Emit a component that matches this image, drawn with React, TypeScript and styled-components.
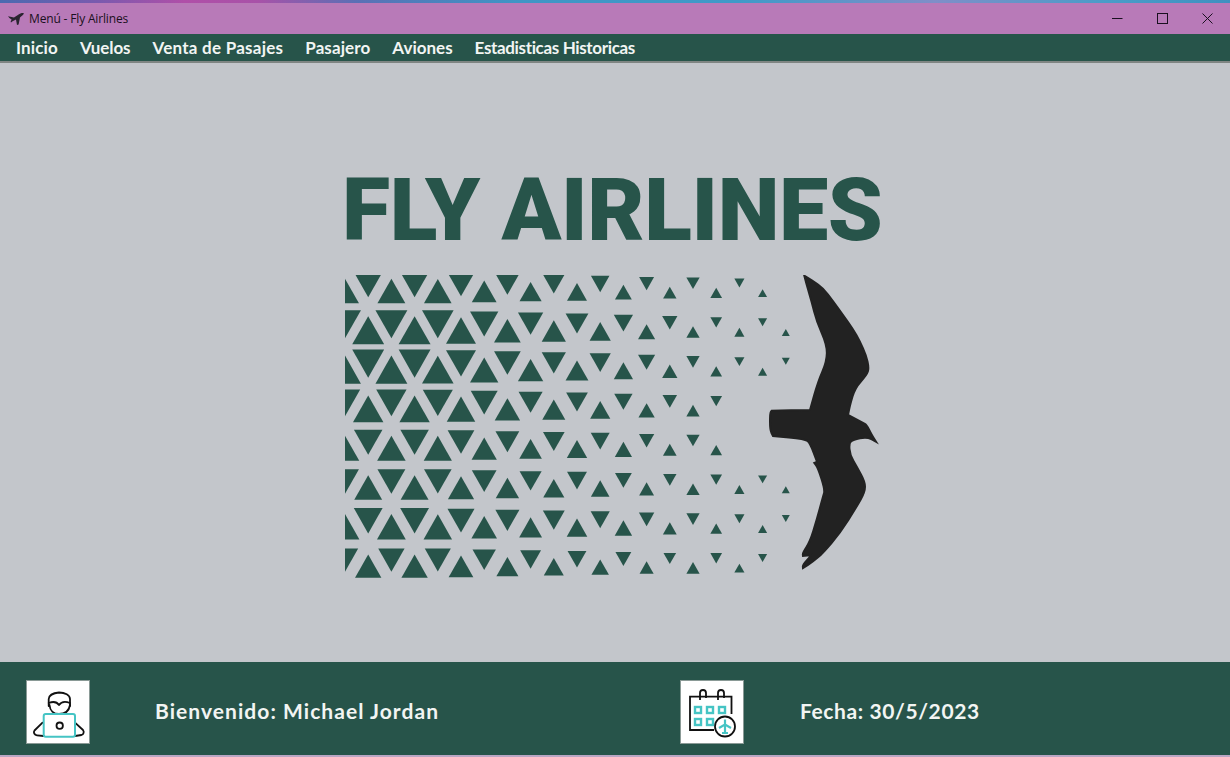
import * as React from 'react';
import styled, { createGlobalStyle } from 'styled-components';

const GlobalStyle = createGlobalStyle`
    html, body {
        margin: 0;
        padding: 0;
        background: #c3c6cb;
    }
`;

const Window = styled.div`
    width: 1230px;
    height: 757px;
    display: flex;
    flex-direction: column;
    overflow: hidden;
    font-family: "Lato", "Liberation Sans", sans-serif;
    font-variant-ligatures: none;
`;

const WallpaperStrip = styled.div`
    height: 3px;
    flex: none;
    background: linear-gradient(90deg, #4a6ab0 0%, #7a5aae 8%, #b04fa8 15%, #a852a8 21%, #5a70b5 29%, #3f95c5 42%, #3f9ac8 60%, #7f8ec8 76%, #4a9cc8 90%, #3f90c0 100%);
`;

const TitleBar = styled.div`
    height: 31px;
    flex: none;
    display: flex;
    align-items: center;
    background: #b87ab8;
    padding-left: 8px;
`;

const TitleText = styled.span`
    margin-left: 5px;
    font: 12px "Open Sans", "Liberation Sans", sans-serif;
    letter-spacing: -0.16px;
    color: #1a1020;
    flex: 1;
`;

const WindowButton = styled.div`
    width: 45px;
    height: 31px;
    display: flex;
    align-items: center;
    justify-content: center;
`;

const MenuBar = styled.nav`
    height: 27px;
    flex: none;
    display: flex;
    align-items: center;
    gap: 22px;
    padding: 0 16px;
    background: #27544a;
    border-bottom: 2px solid #7f8583;
`;

const MenuItem = styled.span<{ $spacing: number }>`
    font-size: 17px;
    font-weight: 700;
    letter-spacing: ${(p) => p.$spacing}px;
    color: #f2f5f3;
    white-space: nowrap;
`;

const Content = styled.main`
    flex: 1;
    display: flex;
    justify-content: center;
    background: #c3c6cb;
    padding-top: 103px;
`;

const Logo = styled.div`
    width: 540px;
    display: flex;
    flex-direction: column;
`;

const LogoTitle = styled.div`
    font-family: "Roboto", "Liberation Sans", sans-serif;
    font-size: 88px;
    line-height: 88px;
    font-weight: 900;
    letter-spacing: -0.4px;
    color: #27544a;
    white-space: nowrap;
    margin-left: -3px;
`;

const LogoGraphic = styled.svg`
    display: block;
    width: 540px;
    height: 310px;
    margin-top: 21px;
`;

const Footer = styled.footer`
    height: 87px;
    flex: none;
    display: flex;
    align-items: center;
    padding-top: 6px;
    background: #27544a;
    border-bottom: 2px solid #b9a6c4;
`;

const FooterGroup = styled.div<{ $width: number; $gap: number; $left: number }>`
    width: ${(p) => p.$width}px;
    padding-left: ${(p) => p.$left}px;
    display: flex;
    align-items: center;
    gap: ${(p) => p.$gap}px;
    box-sizing: border-box;
`;

const IconBox = styled.div`
    width: 62px;
    height: 62px;
    background: #ffffff;
    border: 1px solid #8a9a96;
    flex: none;
`;

const FooterText = styled.span<{ $spacing: number }>`
    font-size: 21px;
    font-weight: 700;
    letter-spacing: ${(p) => p.$spacing}px;
    color: #f2f5f3;
    white-space: nowrap;
    padding-bottom: 2px;
`;

const GREEN = '#27544a';
const STEP = 23.2;
const MENU = [
    { label: 'Inicio', spacing: 0.15 },
    { label: 'Vuelos', spacing: -0.1 },
    { label: 'Venta de Pasajes', spacing: 0.25 },
    { label: 'Pasajero', spacing: 0.1 },
    { label: 'Aviones', spacing: 0 },
    { label: 'Estadisticas Historicas', spacing: -0.35 },
];
// last triangle column and size factor for each of the 8 rows
const ROWS = [
    { last: 18, scale: 0.9 },
    { last: 19, scale: 1.03 },
    { last: 19, scale: 1.03 },
    { last: 16, scale: 0.98 },
    { last: 16, scale: 0.92 },
    { last: 19, scale: 0.9 },
    { last: 19, scale: 0.93 },
    { last: 18, scale: 0.85 },
];
const WIDTHS = [31, 31, 31, 28, 25, 23, 20, 16, 13, 10, 8];

const triangleWidth = (x: number) => {
    const pos = Math.max(0, (x - 345) / 44);
    const i = Math.min(Math.floor(pos), WIDTHS.length - 2);
    return WIDTHS[i] + (WIDTHS[i + 1] - WIDTHS[i]) * (pos - i);
};

const buildTriangles = () => {
    const out: string[] = [];
    ROWS.forEach((row, r) => {
        const mid = 288 + 39.3 * r - 275;
        for (let n = 0; n <= row.last; n++) {
            const x = 345 + STEP * n;
            const big = triangleWidth(x);
            const w = big * (big < 14 ? 1 : row.scale);
            const h = w * 0.88;
            const gap = 3 + (1 - big / 31) * 3;
            const up = (n + r) % 2 === 0;
            const cy = up ? mid + gap : mid - gap;
            const cx = x - 345;
            out.push(
                up
                    ? `${cx},${cy - h / 2} ${cx + w / 2},${cy + h / 2} ${cx - w / 2},${cy + h / 2}`
                    : `${cx},${cy + h / 2} ${cx + w / 2},${cy - h / 2} ${cx - w / 2},${cy - h / 2}`
            );
        }
    });
    return out;
};

// outline of the bird, page coordinates minus the logo origin; a repeated point keeps a sharp corner
const BIRD_POINTS: [number, number][] = [
    [459.3, 0.7], [459.3, 0.7], [468, 6], [478, 13], [488, 26], [498, 40], [508, 54], [515, 66.7], [521, 80], [524, 93], [521.7, 100],
    [510, 113], [505, 130], [503, 140], [503, 140], [518, 148], [518, 148], [521.7, 150], [526.7, 160], [531, 166.7], [531, 166.7],
    [521.7, 161.7], [508, 165], [504, 168], [505, 180], [511.7, 191.7], [520, 206.7], [520, 216.7], [511.7, 231.7], [495, 258], [478, 278],
    [468, 286.7], [458, 293], [458, 293], [457.7, 290], [466.7, 280], [466.7, 280], [458, 281], [458, 281], [457.7, 277.7], [465, 266.7],
    [471.7, 245], [478, 221.7], [480, 215], [473, 193], [469.3, 188], [469.3, 188], [472, 186.7], [472, 186.7], [465, 168], [460, 164],
    [428, 161], [428, 161], [425, 155], [425, 138], [426.7, 135.7], [426.7, 135.7], [465, 135], [465, 135], [473, 106.7], [481.7, 86.7],
    [482, 70], [471.7, 46.7], [466.7, 26.7], [461.7, 10],
];

const smoothPath = (pts: [number, number][]) => {
    const mid = (a: [number, number], b: [number, number]) => `${(a[0] + b[0]) / 2} ${(a[1] + b[1]) / 2}`;
    let d = `M${mid(pts[pts.length - 1], pts[0])}`;
    pts.forEach((p, i) => {
        d += ` Q${p[0]} ${p[1]} ${mid(p, pts[(i + 1) % pts.length])}`;
    });
    return d + ' Z';
};

const PlaneGlyph = () => (
    <svg width="16" height="12" viewBox="0 0 16 12">
        <path d="M0 3.2 L6 4.4 L11 1.2 C13 0 15.6 -0.2 15.8 0.4 C16 1.2 14 2.8 12 4.4 L10.6 11.4 L9 12 L8 6.6 L4.6 8.2 L3 9.4 L2.6 8.8 L3.6 6.6 L1.4 5 Z" fill="#2a2430" />
    </svg>
);

const UserIcon = () => (
    <svg width="62" height="62" viewBox="0 0 62 62" fill="none">
        <g stroke="#111" strokeWidth="1.8" strokeLinecap="round" strokeLinejoin="round">
            <path d="M21.7 25 V18 C22 14 27 12 32 11.5 C38 11.5 43 14 43 18 V25" />
            <path d="M21.7 22 C27 20 30 21 32 24 C34 21 38 20 43 22" />
            <path d="M22.5 24 C23 30 27 33 32 33 C38 33 42 30 43 24" />
            <path d="M15.5 41.7 L7.5 49.5 C6 51.5 7.5 54 10 54.3 L16.7 55" />
            <path d="M48 41.7 L56 49 C57.5 51 56.5 53.5 54.5 54 L48 55" />
        </g>
        <rect x="16.7" y="33" width="31.3" height="22.7" rx="2" stroke="#45c4c4" strokeWidth="2" />
        <circle cx="32.7" cy="44.7" r="3.2" stroke="#111" strokeWidth="1.8" />
    </svg>
);

const CalendarIcon = () => (
    <svg width="62" height="62" viewBox="0 0 62 62" fill="none">
        <path d="M33 49 H9 V15.7 H50.5 V33" stroke="#111" strokeWidth="1.8" />
        <path d="M19 19 V12 A3 3 0 0 1 25 12 V17" stroke="#111" strokeWidth="1.8" />
        <path d="M37 19 V12 A3 3 0 0 1 43 12 V17" stroke="#111" strokeWidth="1.8" />
        <g stroke="#45c4c4" strokeWidth="2.4">
            <rect x="14" y="26" width="6" height="6" />
            <rect x="26" y="26" width="6" height="6" />
            <rect x="38" y="26" width="6" height="6" />
            <rect x="14" y="38" width="6" height="6" />
            <rect x="26" y="38" width="6" height="6" />
        </g>
        <circle cx="44" cy="45.5" r="10" fill="#fff" stroke="#111" strokeWidth="1.8" />
        <path d="M44 38.5 V52 M38 47 L44 43.5 L50 47 M41 52 H47" stroke="#45c4c4" strokeWidth="2.2" />
    </svg>
);

const App = () => {
    const triangles = buildTriangles();
    return (
        <Window>
            <GlobalStyle />
            <WallpaperStrip />
            <TitleBar>
                <PlaneGlyph />
                <TitleText>Menú - Fly Airlines</TitleText>
                <WindowButton>
                    <svg width="11" height="11" viewBox="0 0 11 11">
                        <path d="M0 5.5 H10.5" stroke="#1a1020" />
                    </svg>
                </WindowButton>
                <WindowButton>
                    <svg width="11" height="11" viewBox="0 0 11 11">
                        <rect x="0.5" y="0.5" width="10" height="10" fill="none" stroke="#1a1020" />
                    </svg>
                </WindowButton>
                <WindowButton>
                    <svg width="11" height="11" viewBox="0 0 11 11">
                        <path d="M0.5 0.5 L10.5 10.5 M10.5 0.5 L0.5 10.5" stroke="#1a1020" />
                    </svg>
                </WindowButton>
            </TitleBar>
            <MenuBar>
                {MENU.map((item) => (
                    <MenuItem key={item.label} $spacing={item.spacing}>{item.label}</MenuItem>
                ))}
            </MenuBar>
            <Content>
                <Logo>
                    <LogoTitle>FLY AIRLINES</LogoTitle>
                    <LogoGraphic viewBox="0 0 540 310">
                        {triangles.map((points, i) => (
                            <polygon key={i} points={points} fill={GREEN} />
                        ))}
                        <path d={smoothPath(BIRD_POINTS)} fill="#222222" stroke="#222222" strokeWidth="2" />
                    </LogoGraphic>
                </Logo>
            </Content>
            <Footer>
                <FooterGroup $width={680} $left={26} $gap={65}>
                    <IconBox>
                        <UserIcon />
                    </IconBox>
                    <FooterText $spacing={1.05}>Bienvenido: Michael Jordan</FooterText>
                </FooterGroup>
                <FooterGroup $width={550} $left={0} $gap={56}>
                    <IconBox>
                        <CalendarIcon />
                    </IconBox>
                    <FooterText $spacing={0.6}>Fecha: 30/5/2023</FooterText>
                </FooterGroup>
            </Footer>
        </Window>
    );
};

export default App;
